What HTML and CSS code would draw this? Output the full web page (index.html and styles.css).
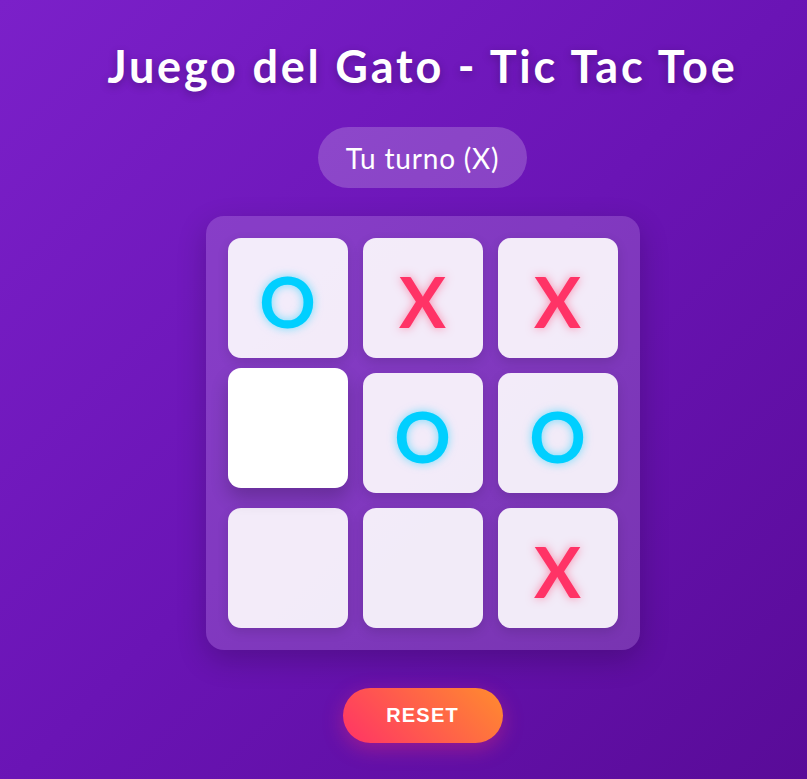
FILE: index.html
```html
<!DOCTYPE html>
<html lang="es">
<head>
<meta charset="utf-8">
<title>Juego del Gato - Tic Tac Toe</title>
<link rel="stylesheet" href="styles.css">
</head>
<body>
  <main class="game">
    <h1 class="title">Juego del Gato - Tic Tac Toe</h1>
    <div class="status">Tu turno (X)</div>
    <div class="board">
      <div class="cell o">O</div>
      <div class="cell x">X</div>
      <div class="cell x">X</div>
      <div class="cell hover"></div>
      <div class="cell o">O</div>
      <div class="cell o">O</div>
      <div class="cell"></div>
      <div class="cell"></div>
      <div class="cell x">X</div>
    </div>
    <button class="reset">RESET</button>
  </main>
</body>
</html>
```
FILE: styles.css
```css
html, body {
  margin: 0;
  padding: 0;
}
body {
  min-height: 100vh;
  background: linear-gradient(135deg, #7b20c9 0%, #6a14b5 50%, #590b98 100%);
  font-family: "Lato", "Noto Sans", sans-serif;
  color: #fff;
  overflow: hidden;
}
.game {
  display: flex;
  flex-direction: column;
  align-items: center;
  padding-left: 38px;
}
.title {
  margin: 40px 0 0;
  font-size: 45px;
  line-height: 53px;
  font-weight: 700;
  letter-spacing: 2.8px;
  text-shadow: 0 3px 8px rgba(0, 0, 0, 0.25);
}
.status {
  margin-top: 34px;
  height: 61px;
  box-sizing: border-box;
  padding: 0 28px;
  display: flex;
  align-items: center;
  border-radius: 31px;
  background: rgba(255, 255, 255, 0.2);
  font-size: 28px;
  letter-spacing: 0.8px;
}
.board {
  margin-top: 28px;
  display: grid;
  grid-template-columns: repeat(3, 120px);
  grid-template-rows: repeat(3, 120px);
  gap: 15px;
  padding: 22px;
  border-radius: 18px;
  background: rgba(255, 255, 255, 0.16);
  box-shadow: 0 10px 30px rgba(0, 0, 0, 0.2);
}
.cell {
  display: flex;
  align-items: center;
  justify-content: center;
  padding-top: 6px;
  box-sizing: border-box;
  border-radius: 13px;
  background: rgba(255, 255, 255, 0.9);
  box-shadow: 0 4px 12px rgba(0, 0, 0, 0.12);
  font-size: 70px;
  font-weight: 700;
  line-height: 1;
}
.cell.hover {
  background: #fff;
  transform: translateY(-5px);
  box-shadow: 0 10px 18px rgba(0, 0, 0, 0.2);
}
.cell.x {
  color: #ff3366;
  text-shadow: 0 0 10px rgba(255, 51, 102, 0.5);
}
.cell.o {
  color: #00cfff;
  text-shadow: 0 0 10px rgba(0, 207, 255, 0.55);
}
.reset {
  margin-top: 38px;
  width: 160px;
  height: 55px;
  border: none;
  border-radius: 28px;
  background: linear-gradient(45deg, #ff3366 0%, #ff8c2e 100%);
  color: #fff;
  font-family: "Liberation Sans", Arial, sans-serif;
  font-size: 20px;
  font-weight: 700;
  letter-spacing: 1.2px;
  box-shadow: 0 6px 20px rgba(255, 51, 102, 0.35);
  cursor: pointer;
}
```
